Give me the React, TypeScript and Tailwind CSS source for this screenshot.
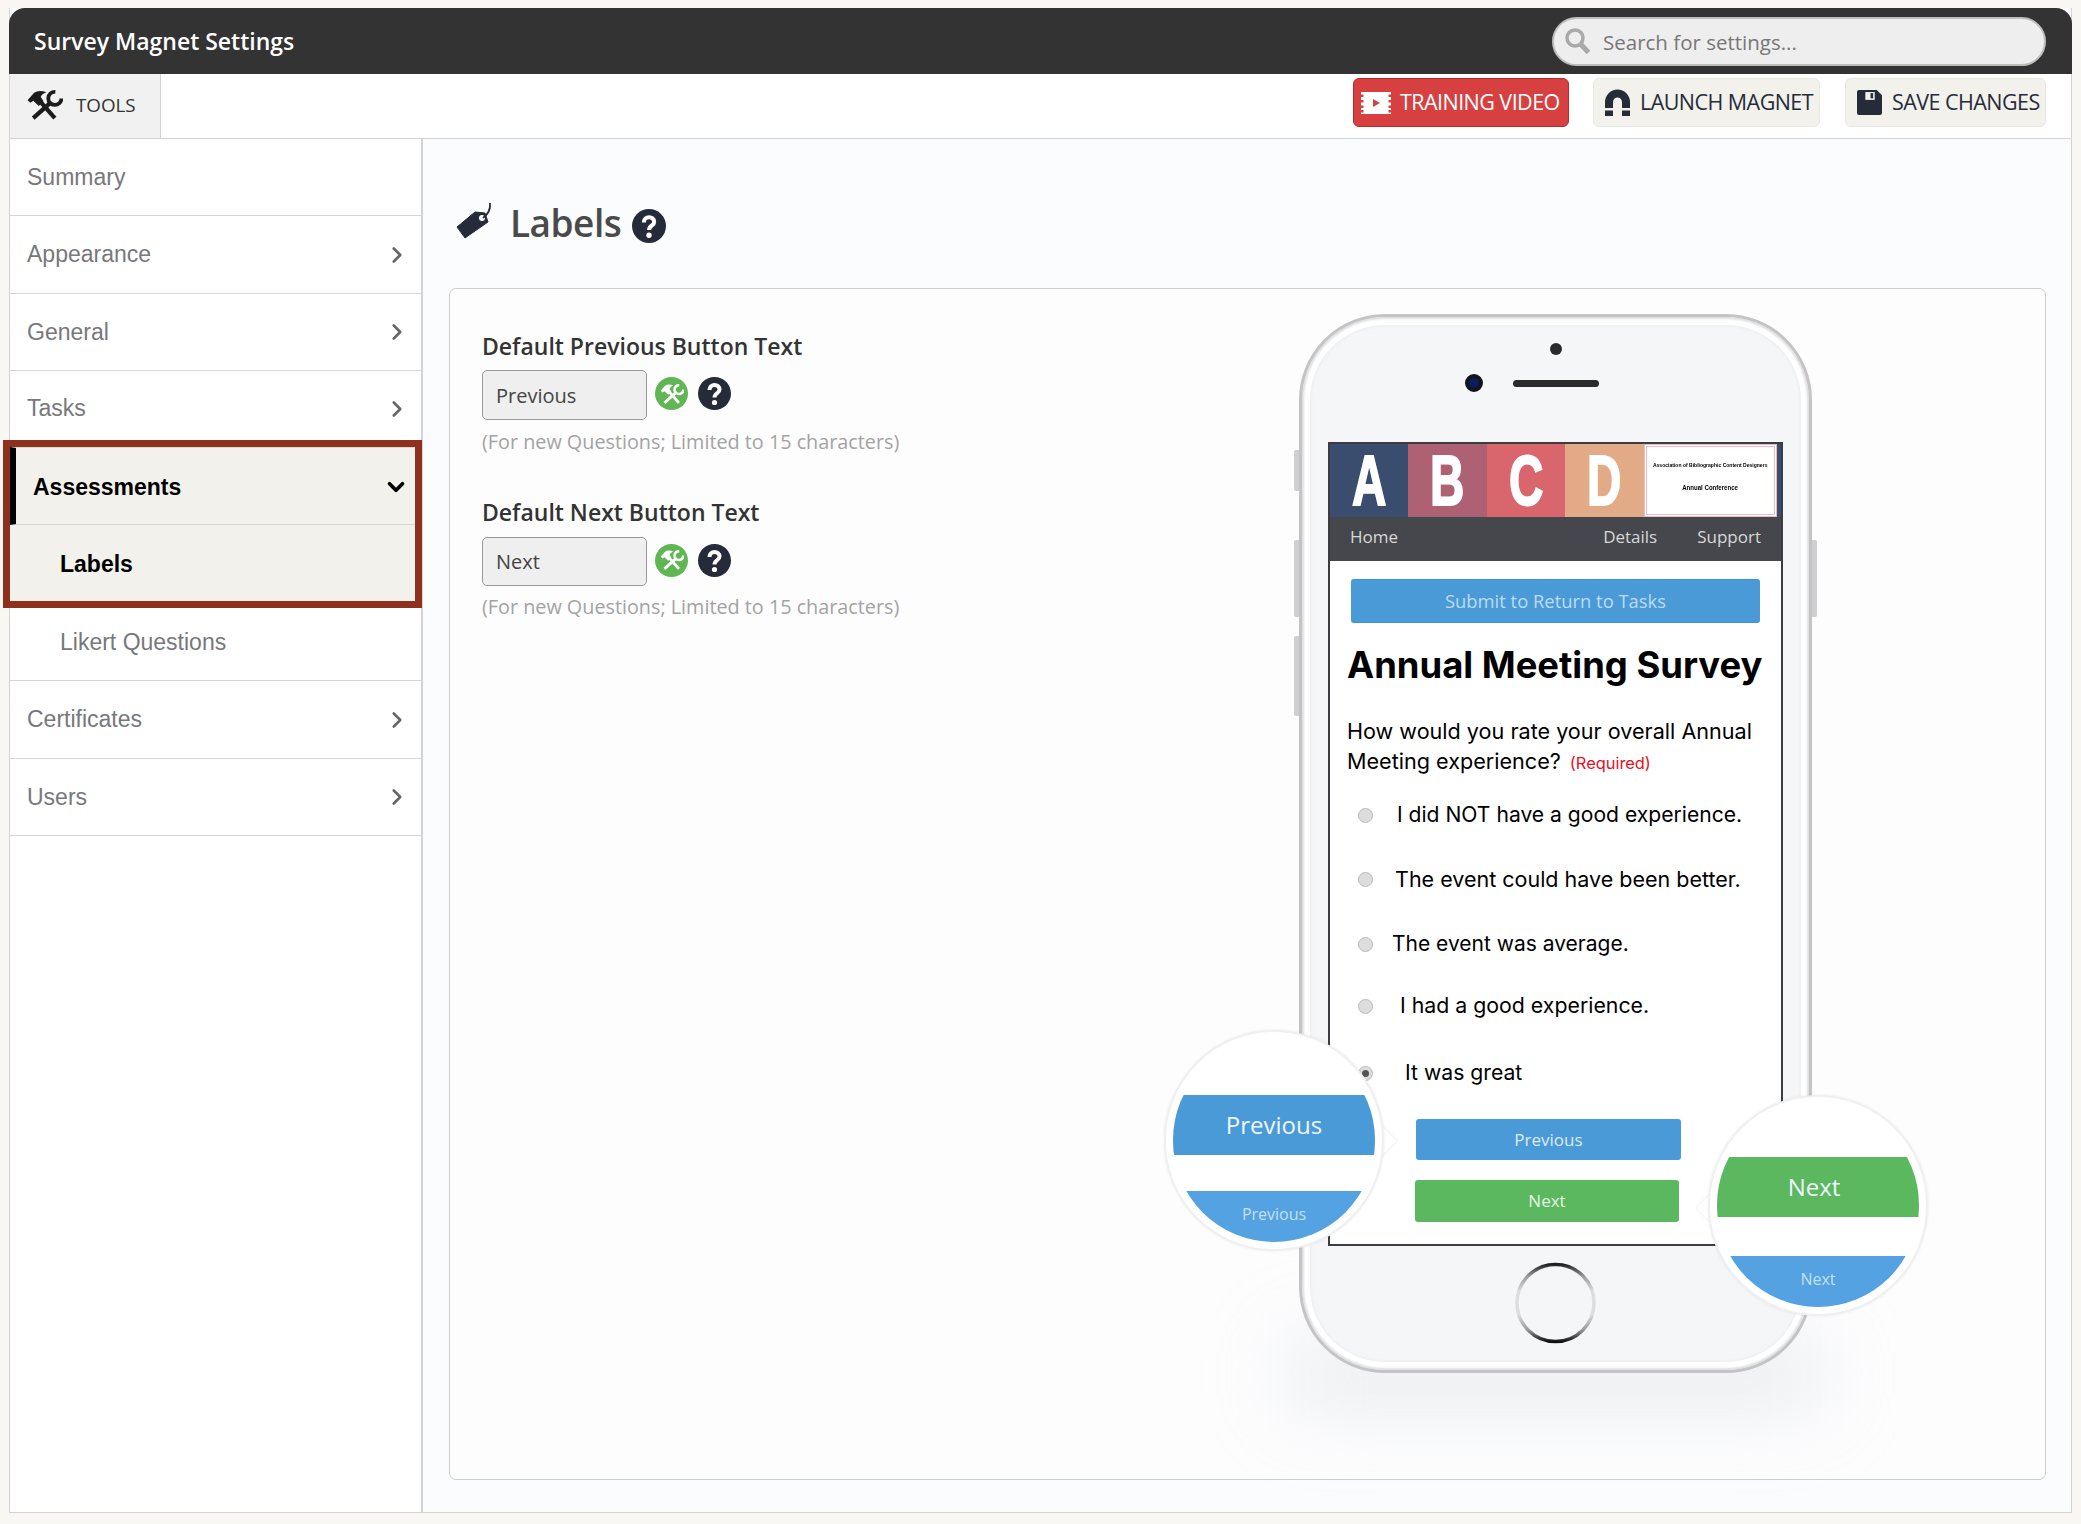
import { ChevronDown, ChevronRight } from 'lucide-react';

/* icons */
function ToolsIcon({ className }: { className?: string }) {
  return (
    <svg viewBox="11 7 38 34" className={className} fill="currentColor" stroke="none">
      <path d="M12 19 L15 21.5 L18 19.5 L24 25 L29 20 L26 15.5 Q27 12.5 32 10.5 Q24 7.5 19 11 Z" />
      <line x1="26" y1="21" x2="41" y2="38" stroke="currentColor" strokeWidth="4.5" />
      <line x1="18" y1="38" x2="36.5" y2="21.5" stroke="currentColor" strokeWidth="4.5" />
      <path d="M41.5 10 A7 7 0 1 0 48 17" fill="none" stroke="currentColor" strokeWidth="4" />
    </svg>
  );
}

function HelpIcon({ className }: { className?: string }) {
  return (
    <svg viewBox="0 0 33 33" className={className}>
      <circle cx="16.5" cy="16.5" r="16.5" fill="#262b3a" />
      <path d="M11.5 13 C11.5 6.5 21.5 6.5 21.5 12.5 C21.5 16.5 16.5 16 16.5 20.5" fill="none" stroke="#fff" strokeWidth="4" />
      <circle cx="16.5" cy="25.5" r="2.6" fill="#fff" />
    </svg>
  );
}

function TagIcon() {
  return (
    <svg viewBox="6 6 36 38" className="mb-[8px] h-[38px] w-[36px] shrink-0">
      <path d="M7 32 L25 17 L35 18 L38 27 L15 43 Z" fill="#262b3a" strokeLinejoin="round" stroke="#262b3a" strokeWidth="1" />
      <circle cx="32" cy="23" r="3" fill="#fff" />
      <path d="M33 23 Q41 17 40 8" fill="none" stroke="#262b3a" strokeWidth="1.8" />
    </svg>
  );
}

function SearchIcon() {
  return (
    <svg viewBox="0 0 27 26" className="h-[26px] w-[27px] shrink-0">
      <circle cx="11" cy="10" r="8" fill="none" stroke="#a9a9a9" strokeWidth="3.5" />
      <line x1="17" y1="16.5" x2="24.5" y2="24.5" stroke="#a9a9a9" strokeWidth="5" />
    </svg>
  );
}

function FilmIcon() {
  return (
    <svg viewBox="0 0 30 22" className="h-[22px] w-[30px] shrink-0">
      <rect width="30" height="22" fill="#fff" />
      {[2.5, 8, 13.5, 18].map(y => (
        <g key={y} fill="#d64040">
          <rect x="0" y={y} width="2.5" height="2.5" />
          <rect x="27.5" y={y} width="2.5" height="2.5" />
        </g>
      ))}
      <path d="M12 7 L19 11 L12 15 Z" fill="#d64040" />
    </svg>
  );
}

function MagnetIcon() {
  return (
    <svg viewBox="0 0 27 27" className="h-[27px] w-[27px] shrink-0" fill="#262b3a">
      <path d="M1 19 V13 A12.5 12.5 0 0 1 26 13 V19 H18 V13 A4.5 4.5 0 0 0 9 13 V19 Z" />
      <rect x="1" y="21.5" width="8" height="5.5" />
      <rect x="18" y="21.5" width="8" height="5.5" />
    </svg>
  );
}

function SaveIcon() {
  return (
    <svg viewBox="0 0 24 24" className="h-[25px] w-[25px] shrink-0">
      <path d="M2 0 H19 L24 5 V22 a2 2 0 0 1 -2 2 H2 a2 2 0 0 1 -2 -2 V2 a2 2 0 0 1 2 -2 Z" fill="#262b3a" />
      <rect x="8" y="2" width="9" height="7.5" fill="#f2f1ec" />
      <rect x="13" y="3" width="2.5" height="5" fill="#262b3a" />
    </svg>
  );
}

function HomeRing() {
  return (
    <svg viewBox="0 0 81 82" className="mt-[16px] h-[82px] w-[81px] shrink-0">
      <defs>
        <linearGradient id="ring" x1="0" y1="0" x2="0" y2="1">
          <stop offset="0" stopColor="#222" />
          <stop offset="0.15" stopColor="#999" />
          <stop offset="0.35" stopColor="#ddd" />
          <stop offset="0.65" stopColor="#ddd" />
          <stop offset="0.85" stopColor="#999" />
          <stop offset="1" stopColor="#111" />
        </linearGradient>
      </defs>
      <circle cx="40.5" cy="41" r="38.5" fill="#f5f6f8" stroke="url(#ring)" strokeWidth="3.5" />
    </svg>
  );
}

/* sidebar */
function NavRow({ label, height, arrow = true }: { label: string; height: string; arrow?: boolean }) {
  return (
    <div className={`${height} flex items-center justify-between border-b border-[#d6d6d6] pl-[17px] pr-[11px] text-[23px] text-[#77787c]`}>
      <span>{label}</span>
      {arrow && <ChevronRight size={26} strokeWidth={2.4} className="text-[#666]" />}
    </div>
  );
}

function Sidebar() {
  return (
    <div className="w-[413px] shrink-0 border-r-2 border-[#d3d3d6] bg-white font-['Liberation_Sans',Arial,sans-serif]">
      <NavRow label="Summary" height="h-[77px]" arrow={false} />
      <NavRow label="Appearance" height="h-[78px]" />
      <NavRow label="General" height="h-[77px]" />
      <NavRow label="Tasks" height="h-[76px]" />
      <div className="relative z-10 mb-[7px] mr-[6px] bg-[#f3f1ec] outline-[7px] outline-[#8f2f1d]">
        <div className="flex h-[78px] items-center justify-between border-y border-[#d6d6d6] border-l-[6px] border-l-black pl-[17px] pr-[6px] pt-[2px] text-[23px] font-bold text-black">
          <span>Assessments</span>
          <ChevronDown size={26} strokeWidth={3.4} />
        </div>
        <div className="flex h-[76px] items-center pl-[50px] pt-[2px] text-[23px] font-bold text-black">Labels</div>
      </div>
      <div className="flex h-[73px] items-center border-b border-[#d6d6d6] pb-[3px] pl-[50px] text-[23px] text-[#77787c]">Likert Questions</div>
      <NavRow label="Certificates" height="h-[78px]" />
      <NavRow label="Users" height="h-[77px]" />
    </div>
  );
}

/* form */
function Field({ label, value, labelClass, rowClass, inputHeight, hintClass }: { label: string; value: string; labelClass: string; rowClass: string; inputHeight: string; hintClass: string }) {
  return (
    <div>
      <div className={`${labelClass} text-[23px] font-semibold leading-[32px] text-[#333]`}>{label}</div>
      <div className={`${rowClass} flex items-center`}>
        <input readOnly value={value} className={`${inputHeight} w-[165px] rounded-[5px] border border-[#9a9a9a] bg-[#efefef] pl-[13px] text-[20px] text-[#444]`} />
        <span className="mb-[3px] ml-[8px] flex h-[33px] w-[33px] items-center justify-center rounded-full bg-[#60b653] text-white">
          <ToolsIcon className="h-[22px] w-[24px]" />
        </span>
        <HelpIcon className="mb-[3px] ml-[10px] h-[33px] w-[33px]" />
      </div>
      <div className={`${hintClass} text-[19.8px] leading-[28px] text-[#a3a3a3]`}>(For new Questions; Limited to 15 characters)</div>
    </div>
  );
}

/* phone mockup */
const options = [
  { text: 'I did NOT have a good experience.', row: 'mt-[21px] text-[21.1px]', gap: 'ml-[24px]', on: false },
  { text: 'The event could have been better.', row: 'mt-[32px] text-[21.5px]', gap: 'ml-[22px]', on: false },
  { text: 'The event was average.', row: 'mt-[33px] text-[21px]', gap: 'ml-[19px]', on: false },
  { text: 'I had a good experience.', row: 'mt-[30px] text-[21.3px]', gap: 'ml-[27px]', on: false },
  { text: 'It was great', row: 'mt-[35px] text-[21.2px]', gap: 'ml-[32px]', on: true },
];

function Letter({ char, box }: { char: string; box: string }) {
  return (
    <div className={`${box} flex items-center justify-center`}>
      <span className="scale-x-[0.68] text-[70px] leading-none [-webkit-text-stroke:2px_white]">{char}</span>
    </div>
  );
}

function Screen() {
  return (
    <div className="mt-[55px] h-[804px] w-[455px] shrink-0 border-2 border-[#3c3d40] bg-white">
      <div className="flex h-[73px] bg-[#3a4d6f] font-['Liberation_Sans',Arial,sans-serif] font-bold text-white">
        <Letter char="A" box="w-[78px]" />
        <Letter char="B" box="w-[79px] bg-[#ad6173]" />
        <Letter char="C" box="w-[78px] bg-[#d9666c]" />
        <Letter char="D" box="w-[79px] bg-[#e2aa87]" />
        <div className="flex w-[133px] flex-col items-center gap-[15px] border-[3px] border-double border-[#eebcbc] bg-white pt-[15px] text-[6px] leading-[7px] text-black">
          <span className="scale-x-[0.84] whitespace-nowrap">Association of Bibliographic Content Designers</span>
          <span className="scale-x-[0.87] whitespace-nowrap text-[7px]">Annual Conference</span>
        </div>
      </div>
      <div className="flex h-[44px] items-center justify-between bg-[#45474c] pb-[5px] pl-[20px] pr-[20px] text-[17px] text-[#d8d8d8]">
        <span>Home</span>
        <span className="flex gap-[40px]"><span>Details</span><span>Support</span></span>
      </div>
      <div className="mx-[21px] mt-[18px] flex h-[44px] items-center justify-center rounded-[3px] border-y border-[#3f92d8] bg-[#4a9ad8] text-[18.4px] text-[#bcdcf5]">Submit to Return to Tasks</div>
      <div className="ml-[17px] mt-[20px] whitespace-nowrap font-['Inter',sans-serif] text-[36.4px] font-bold leading-[44px] text-black">Annual Meeting Survey</div>
      <div className="ml-[17px] mt-[29px] whitespace-nowrap font-['Inter',sans-serif] text-[21.6px] leading-[30px] text-black">
        How would you rate your overall Annual
        <br />
        Meeting experience? <span className="ml-[3px] text-[16.4px] text-[#e8101f]">(Required)</span>
      </div>
      {options.map(o => (
        <div key={o.text} className={`${o.row} flex h-[32px] items-center whitespace-nowrap pl-[28px] font-['Inter',sans-serif] text-black`}>
          <span className="flex h-[15px] w-[15px] shrink-0 items-center justify-center rounded-full border border-[#bbb] bg-[#ddd]">
            {o.on && <span className="h-[7px] w-[7px] rounded-full bg-[#555]" />}
          </span>
          <span className={o.gap}>{o.text}</span>
        </div>
      ))}
      <div className="ml-[86px] mt-[30px] flex h-[41px] w-[265px] items-center justify-center rounded-[3px] bg-[#4a9ad8] text-[17px] text-[#dcebf8]">Previous</div>
      <div className="ml-[85px] mt-[20px] flex h-[42px] w-[264px] items-center justify-center rounded-[3px] bg-[#5cb85f] text-[17px] text-[#e4f5e4]">Next</div>
    </div>
  );
}

function Loupe({ place, arrow, spacer, gap, band, big, small }: { place: string; arrow: string; spacer: string; gap: string; band: string; big: string; small: string }) {
  return (
    <div className={`${place} absolute z-10 h-[221px] w-[220px]`}>
      <div className={`${arrow} absolute h-[24px] w-[24px] rotate-45 bg-white shadow-[0_0_2px_rgba(0,0,0,0.15)]`} />
      <div className="relative h-full w-full rounded-full border-2 border-[#f0f0f0] bg-white p-[7px] shadow-[0_0_3px_rgba(0,0,0,0.08)]">
        <div className="flex h-full w-full flex-col overflow-hidden rounded-full">
          <div className={spacer} />
          <div className={`${band} flex h-[60px] shrink-0 items-center justify-center text-[24px] text-[#eef6fc]`}>{big}</div>
          <div className={gap} />
          <div className="flex-1 bg-[#55a2e2] pt-[11px] text-center text-[16px] text-[#c5e0f6]">{small}</div>
        </div>
      </div>
    </div>
  );
}

function Phone() {
  return (
    <div className="relative mr-[233px] mt-[25px] h-fit shrink-0">
      <div className="absolute -left-[10px] -right-[10px] top-[1030px] h-[60px] bg-[#c9ccd2]/40 blur-2xl" />
      <div className="relative flex h-[1059px] w-[513px] flex-col items-center rounded-[86px] border-[3px] border-[#c4c4c6] bg-[#f5f6f8] pt-[26px] shadow-[inset_0_0_2px_2px_#e0e0e0,inset_0_0_0_8px_#fff,inset_0_0_3px_9px_#eceded]">
        <div className="absolute -left-[8px] top-[133px] h-[41px] w-[5px] rounded-l-[2px] bg-[#cfcfd1]" />
        <div className="absolute -left-[8px] top-[223px] h-[77px] w-[5px] rounded-l-[2px] bg-[#cfcfd1]" />
        <div className="absolute -left-[8px] top-[319px] h-[80px] w-[5px] rounded-l-[2px] bg-[#cfcfd1]" />
        <div className="absolute -right-[8px] top-[223px] h-[77px] w-[5px] rounded-r-[2px] bg-[#cfcfd1]" />

        <div className="h-[12px] w-[12px] shrink-0 rounded-full bg-[#2b2b2b]" />
        <div className="relative mt-[25px] h-[7px] w-[86px] shrink-0 rounded-full bg-[#2b2b2b]">
          <div className="absolute -left-[48px] -top-[6px] h-[18px] w-[18px] rounded-full border-[4px] border-[#14141c] bg-[#0c1c5c]" />
        </div>
        <Screen />
        <HomeRing />

        <Loupe place="-left-[138px] top-[713px]" arrow="-right-[8px] top-[99px]" spacer="h-[56px] shrink-0" gap="h-[36px] shrink-0" band="bg-[#4a9ad8]" big="Previous" small="Previous" />
        <Loupe place="left-[406px] top-[778px]" arrow="-left-[7px] top-[101px]" spacer="h-[53px] shrink-0" gap="h-[39px] shrink-0" band="bg-[#5cb85f] pr-[8px]" big="Next" small="Next" />
      </div>
    </div>
  );
}

export default function App() {
  return (
    <div className="h-[1524px] bg-[#f8f7f3] px-[9px] pt-2 font-['Open_Sans',sans-serif]">
      <div className="flex h-[1505px] flex-col border-x border-b border-[#d3d3d6] bg-[#fbfcfe]">
        {/* title bar */}
        <div className="-mx-px flex h-[66px] shrink-0 items-center justify-between rounded-t-[16px] bg-[#333] pl-[25px] pr-[26px]">
          <span className="text-[23px] font-semibold text-white">Survey Magnet Settings</span>
          <div className="flex h-[49px] w-[494px] items-center rounded-full border-2 border-[#bdbdbd] bg-[#eee] pl-[10px]">
            <SearchIcon />
            <span className="ml-[12px] mt-[3px] text-[20.5px] text-[#777]">Search for settings...</span>
          </div>
        </div>

        {/* toolbar */}
        <div className="flex h-[65px] shrink-0 justify-between border-b border-[#d3d3d6] bg-white pr-[25px]">
          <div className="flex w-[151px] items-center border-r border-[#d3d3d6] bg-[#f1f1f1] pb-[2px] pl-[16px]">
            <ToolsIcon className="h-[32px] w-[37px] text-[#1c1c1c]" />
            <span className="ml-[13px] text-[18.8px] font-medium text-[#333]">TOOLS</span>
          </div>
          <div className="flex items-start gap-[24px] whitespace-nowrap pt-[4px] text-[21.5px] tracking-[-0.55px]">
            <div className="flex h-[49px] w-[216px] items-center rounded-[6px] border border-[#b92a2a] bg-[#d64040] pl-[7px] font-medium text-white">
              <FilmIcon />
              <span className="ml-[9px]">TRAINING VIDEO</span>
            </div>
            <div className="flex h-[49px] w-[227px] items-center rounded-[6px] border border-[#e8e7e2] bg-[#f2f1ec] pl-[10px] font-medium text-[#262b3a]">
              <MagnetIcon />
              <span className="ml-[9px]">LAUNCH MAGNET</span>
            </div>
            <div className="ml-[1px] flex h-[49px] w-[201px] items-center rounded-[6px] border border-[#e8e7e2] bg-[#f2f1ec] pl-[11px] font-medium text-[#262b3a]">
              <SaveIcon />
              <span className="ml-[10px]">SAVE CHANGES</span>
            </div>
          </div>
        </div>

        <div className="flex min-h-0 flex-1">
          <Sidebar />
          <div className="flex min-w-0 flex-1 flex-col pl-[26px] pr-[25px]">
            <div className="flex h-[149px] shrink-0 items-center pl-[7px] pt-[21px]">
              <TagIcon />
              <span className="mb-[2px] ml-[18px] text-[37px] font-semibold tracking-[-0.5px] text-[#4a4a4a]">Labels</span>
              <HelpIcon className="ml-[11px] mt-[4px] h-[34px] w-[34px]" />
            </div>
            <div className="flex h-[1192px] shrink-0 rounded-[7px] border border-[#cdcdd0] bg-[#fdfdfe]">
              <div className="min-w-0 flex-1 pl-[32px] pt-[41px]">
                <Field label="Default Previous Button Text" value="Previous" labelClass="" rowClass="mt-[8px]" inputHeight="h-[50px]" hintClass="mt-[8px]" />
                <Field label="Default Next Button Text" value="Next" labelClass="mt-[40px]" rowClass="mt-[9px]" inputHeight="h-[49px]" hintClass="mt-[7px]" />
              </div>
              <Phone />
            </div>
          </div>
        </div>
      </div>
    </div>
  );
}
